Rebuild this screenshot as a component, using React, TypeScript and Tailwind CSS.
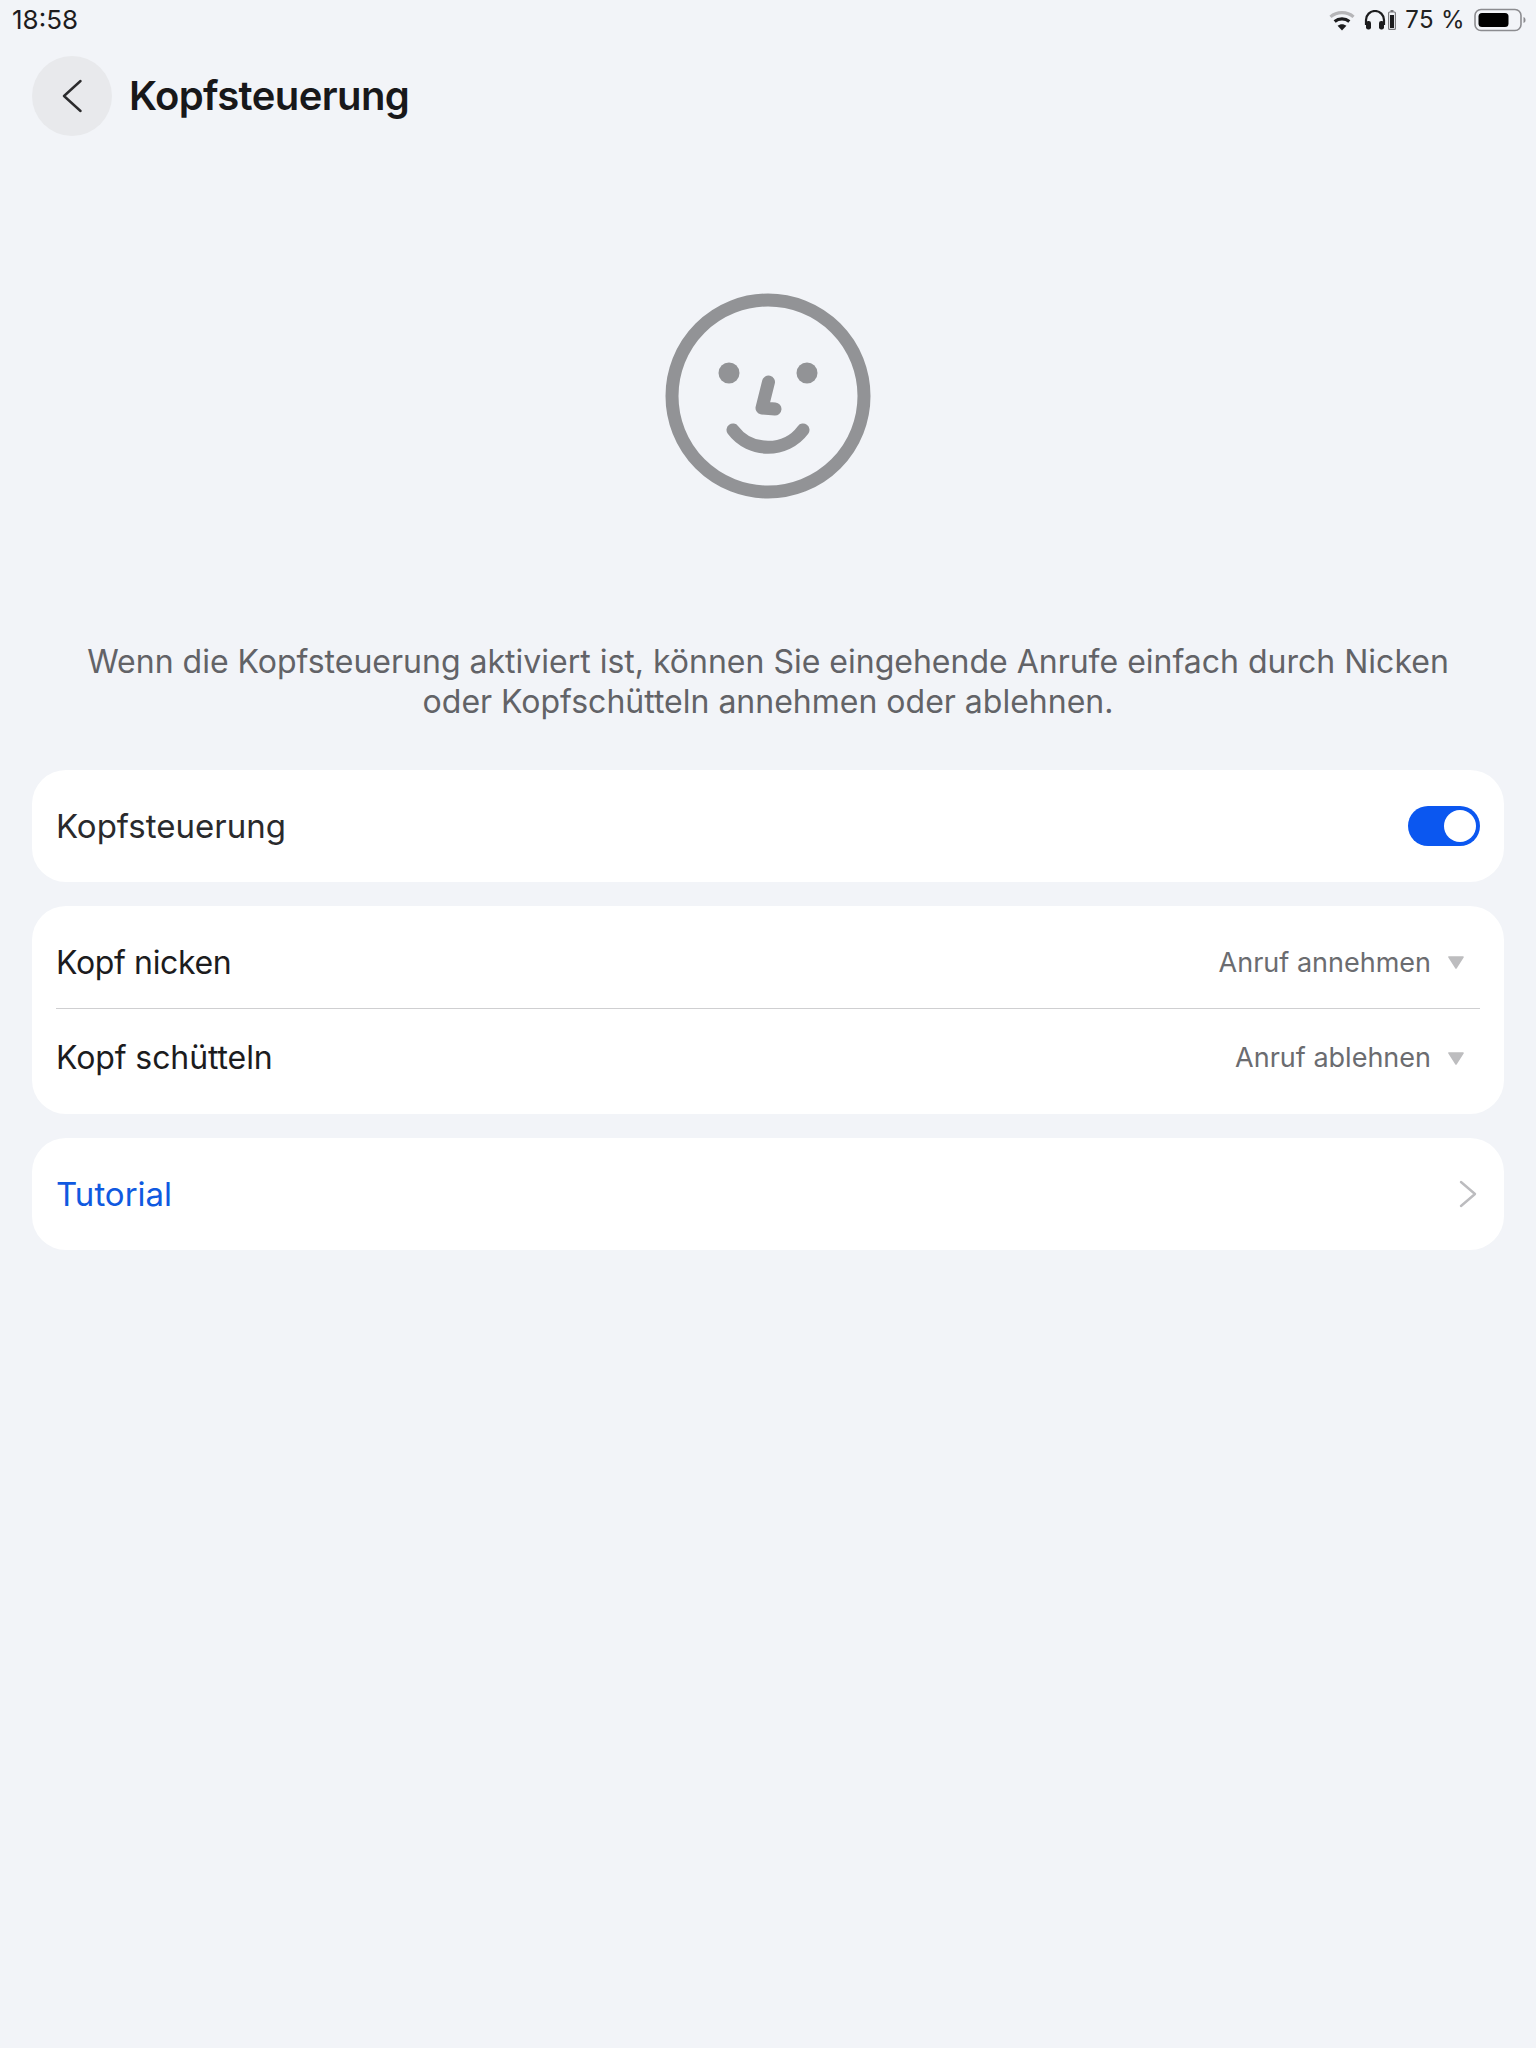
// Kopfsteuerung settings screen

const Caret = () => (
  <svg width="16" height="13" viewBox="0 0 16 13" className="ml-[17px] mr-4 shrink-0">
    <path d="M1 1h14l-7 11z" fill="#bdbdbf" stroke="#bdbdbf" strokeWidth="1.6" strokeLinejoin="round" />
  </svg>
);

const StatusIcons = () => (
  <div className="flex items-center text-[#1c1c1e]">
    {/* wifi */}
    <svg width="26" height="21" viewBox="0 0 24 20" className="mr-[9px]">
      <path d="M1 6.5C7 1.2 17 1.2 23 6.5" fill="none" stroke="#b5b5b8" strokeWidth="3" />
      <path d="M5 11C9 7.6 15 7.6 19 11" fill="none" stroke="#1c1c1e" strokeWidth="3" />
      <path d="M12 19.5l-4.2-4.5c2.4-2 6-2 8.4 0z" fill="#1c1c1e" />
    </svg>
    {/* headphones */}
    <svg width="22" height="20" viewBox="0 0 22 20">
      <path d="M2 15V10a9 9 0 0 1 18 0v5" fill="none" stroke="#1c1c1e" strokeWidth="2.2" />
      <rect x="2" y="11" width="5" height="8.5" rx="2.2" fill="#1c1c1e" />
      <rect x="15" y="11" width="5" height="8.5" rx="2.2" fill="#1c1c1e" />
    </svg>
    {/* headphone battery */}
    <svg width="8" height="20" viewBox="0 0 8 20" className="ml-[2px]">
      <rect x="2.5" y="0" width="3" height="2" fill="#77777a" />
      <rect x="0.6" y="2" width="6.8" height="17.4" rx="1" fill="none" stroke="#77777a" strokeWidth="1.1" />
      <rect x="2" y="5" width="4" height="13" fill="#1c1c1e" />
    </svg>
    <span className="ml-[9px] text-[24px] leading-[28px] tracking-[0.4px] text-[#222]">75 %</span>
    {/* battery */}
    <svg width="52" height="24" viewBox="0 0 52 24" className="ml-[9px]">
      <rect x="1" y="1.5" width="46" height="21" rx="6" fill="none" stroke="#8c8c90" strokeWidth="1.6" />
      <rect x="4.5" y="5" width="30" height="14" rx="3.5" fill="#000" />
      <path d="M49.5 9c1.5.5 2 1.6 2 3s-.5 2.5-2 3z" fill="#8c8c90" />
    </svg>
  </div>
);

const FaceIcon = () => (
  <svg width="236" height="230" viewBox="0 0 236 230" fill="none" stroke="#929396" strokeLinecap="round" strokeLinejoin="round">
    <circle cx="118" cy="116" r="96" strokeWidth="13" />
    <circle cx="79" cy="93" r="10.5" fill="#929396" stroke="none" />
    <circle cx="157" cy="93" r="10.5" fill="#929396" stroke="none" />
    <path d="M118.5 102L112 128L125 129" strokeWidth="13" />
    <path d="M83 150C100 173 136 173 153 150" strokeWidth="13" />
  </svg>
);

export default function App() {
  return (
    <div className="min-h-[2048px] bg-[#f2f4f8] font-['Inter','Liberation_Sans',sans-serif] text-[#1c1c1e]">
      {/* status bar */}
      <div className="flex h-[40px] items-center justify-between pl-[12px] pr-[10px]">
        <span className="text-[26px] leading-[28px] text-[#1c1c1e]">18:58</span>
        <StatusIcons />
      </div>

      {/* header */}
      <div className="mt-[16px] flex items-center pl-[32px]">
        <div className="flex h-[80px] w-[80px] items-center justify-center rounded-full bg-[#e8e9ec]">
          <svg width="20" height="34" viewBox="0 0 20 34" fill="none" stroke="#2b2b2d" strokeWidth="2.4" strokeLinecap="round" strokeLinejoin="round" className="mr-[1px]">
            <path d="M18.5 2L2 17l16.5 15" />
          </svg>
        </div>
        <h1 className="ml-[17px] text-[40px] font-semibold leading-[48px] tracking-[-0.6px] text-[#18181a]">Kopfsteuerung</h1>
      </div>

      <div className="mt-[144px] flex justify-center">
        <FaceIcon />
      </div>

      <p className="mx-auto mt-[132px] w-[1420px] text-center text-[32px] leading-[40px] text-[#626367]">
        Wenn die Kopfsteuerung aktiviert ist, können Sie eingehende Anrufe einfach durch Nicken
        <br />
        oder Kopfschütteln annehmen oder ablehnen.
      </p>

      <div className="mx-[32px] mt-[48px] flex flex-col gap-[24px]">
        <div className="flex h-[112px] items-center justify-between rounded-[34px] bg-white px-[24px]">
          <span className="text-[33px] leading-[40px] text-[#2a2a2c]">Kopfsteuerung</span>
          <div className="flex h-[40px] w-[72px] items-center justify-end rounded-full bg-[#0b57f0] pr-[4px]">
            <div className="h-[32px] w-[32px] rounded-full bg-white" />
          </div>
        </div>

        <div className="flex h-[208px] flex-col rounded-[34px] bg-white px-[24px]">
          <div className="flex h-[103px] items-center justify-between border-b-[1.5px] border-[#cfcfd1] pt-[11px]">
            <span className="text-[32px] leading-[40px] tracking-[-0.35px] text-[#1c1c1e]">Kopf nicken</span>
            <div className="flex items-center">
              <span className="text-[27px] leading-[36px] text-[#6b6c70]">Anruf annehmen</span>
              <Caret />
            </div>
          </div>
          <div className="flex h-[93px] items-center justify-between pt-[5px]">
            <span className="text-[32px] leading-[40px] tracking-[-0.1px] text-[#1c1c1e]">Kopf schütteln</span>
            <div className="flex items-center">
              <span className="text-[27px] leading-[36px] text-[#6b6c70]">Anruf ablehnen</span>
              <Caret />
            </div>
          </div>
        </div>

        <div className="flex h-[112px] items-center justify-between rounded-[34px] bg-white pl-[24px] pr-[27px]">
          <span className="text-[33px] leading-[40px] text-[#1059e0]">Tutorial</span>
          <svg width="18" height="28" viewBox="0 0 18 28" fill="none" stroke="#bcbcbf" strokeWidth="2.4" strokeLinecap="round" strokeLinejoin="round">
            <path d="M2 2l14 12L2 26" />
          </svg>
        </div>
      </div>
    </div>
  );
}
